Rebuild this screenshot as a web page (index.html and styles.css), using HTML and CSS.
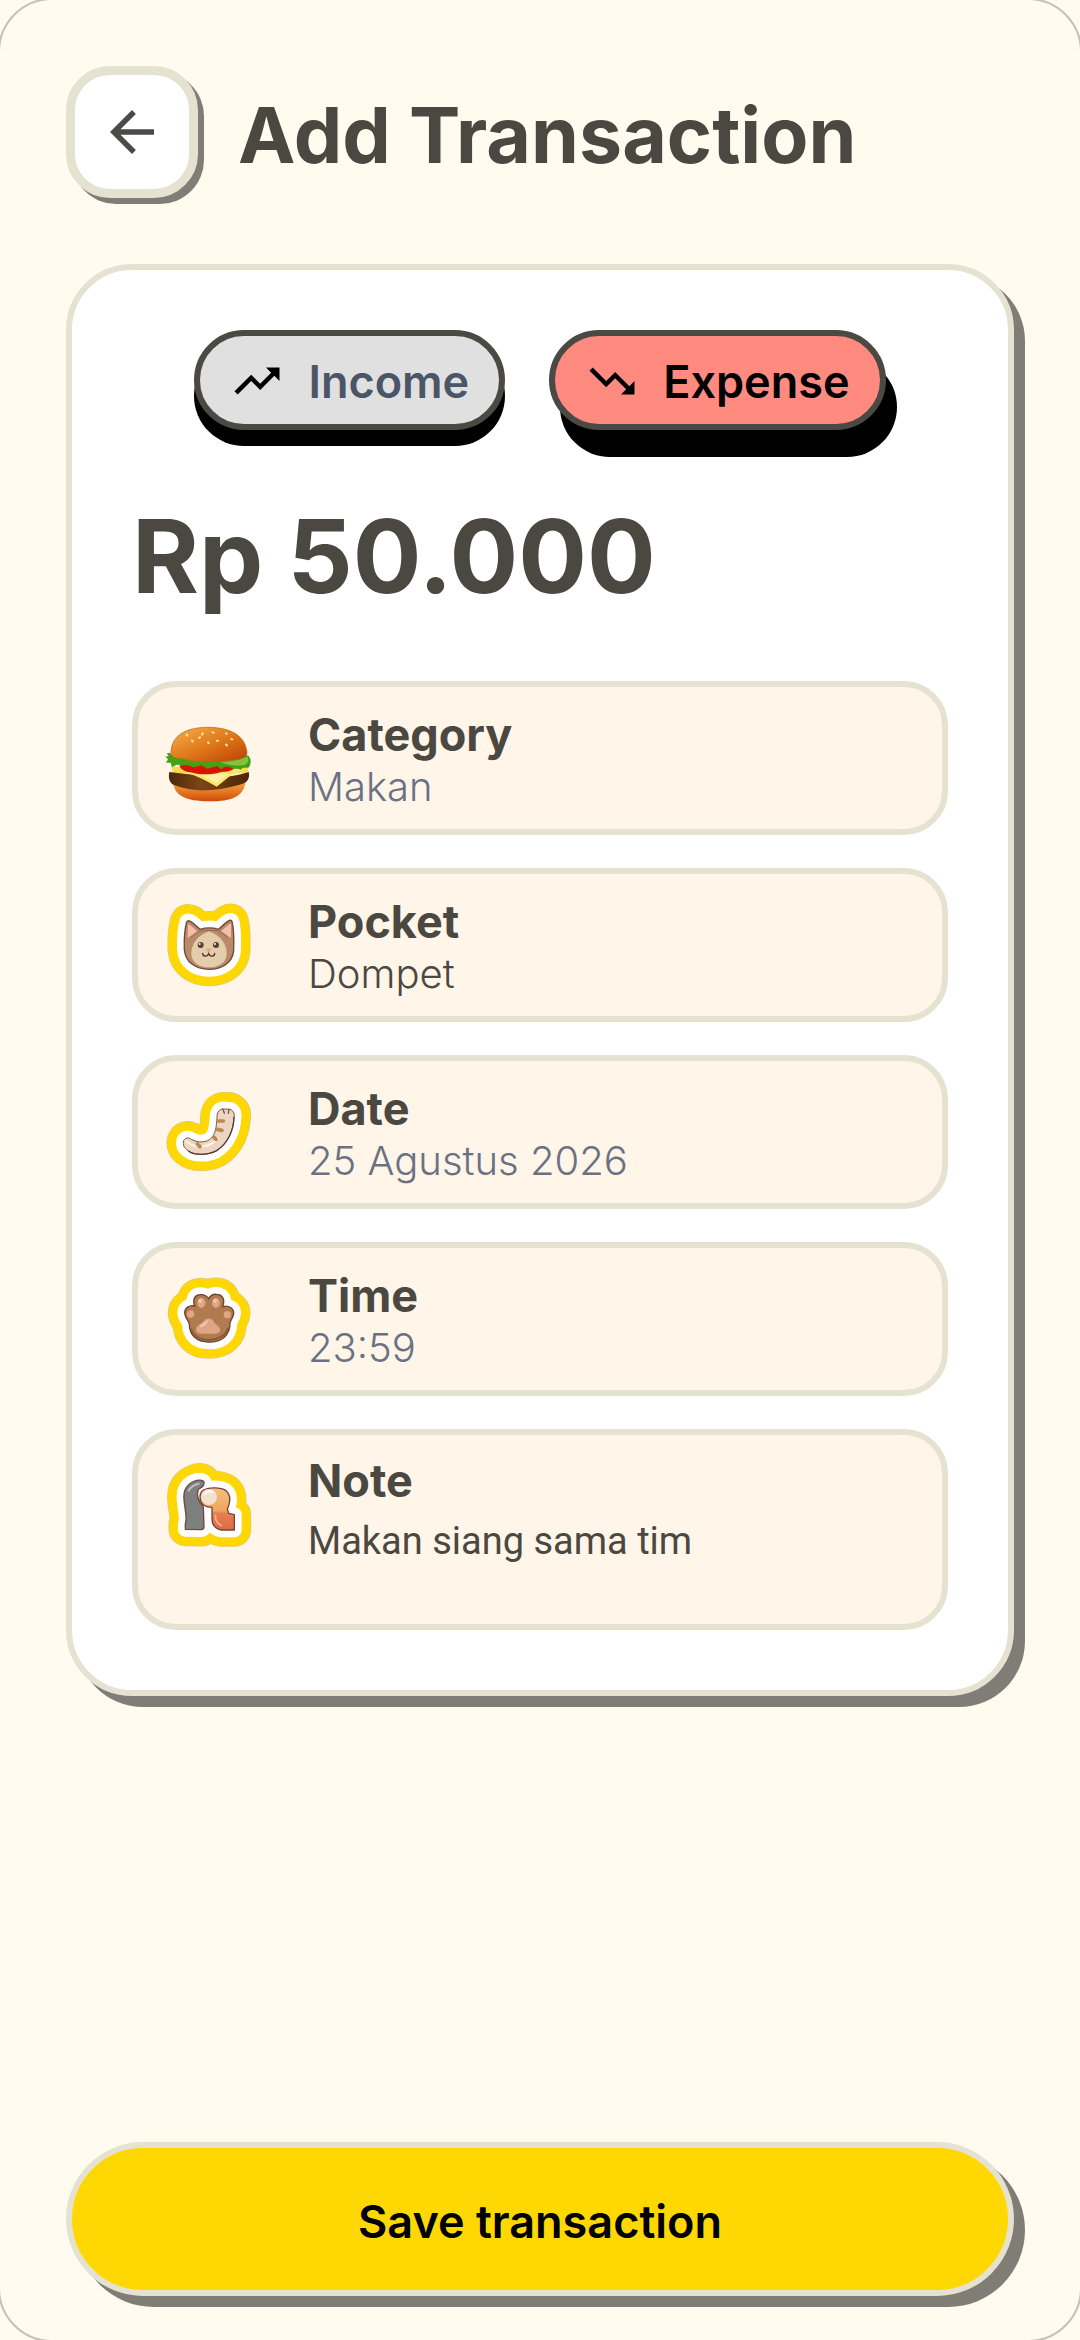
FILE: index.html
```html
<!DOCTYPE html>
<html lang="en">
  <head>
    <meta charset="utf-8">
    <meta name="viewport" content="width=device-width, initial-scale=1">
    <title>Add Transaction</title>
    <link rel="stylesheet" href="styles.css">
  </head>
  <body>
    <header class="header">
      <button class="back" type="button" aria-label="Back">
        <svg viewBox="0 0 24 24"><path d="M20 11H7.83l5.59-5.59L12 4l-8 8 8 8 1.41-1.41L7.83 13H20v-2z" /></svg>
      </button>
      <h1>Add Transaction</h1>
    </header>

    <form class="form">
      <div class="card">
        <div class="types">
          <button class="type income" type="button" aria-pressed="false">
            <svg viewBox="0 0 24 24"><path d="M16 6l2.29 2.29-4.88 4.88-4-4L2 16.59 3.41 18l6-6 4 4 6.3-6.29L22 12V6z" /></svg>
            Income
          </button>
          <button class="type expense" type="button" aria-pressed="true">
            <svg viewBox="0 0 24 24"><path d="M16 18l2.29-2.29-4.88-4.88-4 4L2 7.41 3.41 6l6 6 4-4 6.3 6.29L22 12v6z" /></svg>
            Expense
          </button>
        </div>

        <input class="amount" type="text" aria-label="Amount" value="Rp 50.000">

        <div class="fields">
          <button class="field" type="button">
            <svg class="field-icon" viewBox="135 132 264 264">
              <defs>
                <linearGradient id="bun" x1="0" y1="0" x2="1" y2="1">
                  <stop offset="0" stop-color="#f6b04a" />
                  <stop offset=".5" stop-color="#e07a1c" />
                  <stop offset="1" stop-color="#bd3f02" />
                </linearGradient>
                <linearGradient id="bottomBun" x1="0" y1="0" x2="0" y2="1">
                  <stop offset="0" stop-color="#f5a03c" />
                  <stop offset="1" stop-color="#cf4d08" />
                </linearGradient>
                <linearGradient id="patty" x1="0" y1="0" x2="1" y2="0">
                  <stop offset="0" stop-color="#4a2a0c" />
                  <stop offset=".4" stop-color="#7d4516" />
                  <stop offset="1" stop-color="#4c2507" />
                </linearGradient>
              </defs>
              <path fill="url(#bottomBun)" d="M160 340C164 376 196 394 267 394S370 378 376 338Z" />
              <path fill="#fbd84e" d="M154 290h228l4 14-14 6H160z" />
              <path fill="url(#patty)" d="M148 306C144 324 148 340 164 346C200 358 236 364 270 360C304 358 330 352 366 342C384 338 390 322 386 306C350 318 320 320 290 322L200 312Z" />
              <path fill="#ffe56b" d="M180 300C220 314 258 330 290 350L330 318L378 296Z" />
              <path fill="#fff2a4" d="M240 314L328 312L290 338Z" />
              <path fill="#d91407" d="M178 286C182 302 200 306 218 308C244 316 280 314 304 306C326 306 338 302 344 292L300 280Z" />
              <path fill="#46a012" d="M140 250L150 248 156 256C220 276 320 276 382 256C394 262 394 278 388 290C380 298 370 288 362 300C352 292 342 302 330 290L314 290 304 298 292 288 262 296 244 286 222 292 204 286 170 284 156 292 152 278 138 278 144 268 136 260 146 258Z" />
              <path fill="#83c33d" d="M300 276C330 274 356 270 382 260C388 268 384 278 376 284C350 290 326 286 300 276Z" />
              <path fill="url(#bun)" stroke="#a96c22" stroke-width="2" d="M153 250C152 206 186 172 262 172C340 172 376 202 381 246C382 264 362 268 340 270C290 278 236 278 184 266C164 264 154 262 153 250Z" />
              <g stroke="#ffe9a0" stroke-width="6" stroke-linecap="round">
                <path d="M202 196l-2-3M218 214l-2-2M237 204l3-2M248 190l-2 3M266 219l-2-2M281 188l-3-1M294 212l-3 1M320 191l-2-1M334 207l3 1M321 226l-3-2" />
              </g>
            </svg>
            <span class="field-text">
              <strong>Category</strong>
              <span class="value">Makan</span>
            </span>
          </button>

          <button class="field" type="button">
            <svg class="field-icon" viewBox="135 123 264 264">
              <defs>
                <path id="cat" d="M200 186C204 178 212 182 240 208C256 203 280 203 296 208C322 182 332 176 336 184C342 206 342 240 341 272C338 308 306 328 267 328S196 308 193 268C192 240 194 208 200 186Z" />
              </defs>
              <use href="#cat" class="sticker-edge" />
              <use href="#cat" class="sticker-ring" />
              <use href="#cat" class="sticker-white" />
              <use href="#cat" fill="#b98a68" stroke="#6f4a3b" stroke-width="4" />
              <path fill="#f3bfab" d="M204 192C210 194 224 206 232 214L203 234ZM333 190C324 194 312 206 304 214L333 234Z" />
              <path fill="#e3cdab" d="M267 214C300 226 322 252 320 284C318 308 296 322 267 322S216 308 214 284C212 252 234 226 267 214Z" />
              <path fill="none" stroke="#98694d" stroke-width="3" d="M214 234C226 214 250 208 267 212C286 208 308 214 322 234" />
              <circle cx="242" cy="255" r="9" fill="#554033" />
              <circle cx="288" cy="255" r="9" fill="#554033" />
              <circle cx="239" cy="252" r="3" fill="#fff" />
              <circle cx="285" cy="252" r="3" fill="#fff" />
              <path fill="#ef9d8b" d="M257 266h18l-9 12z" />
              <path fill="none" stroke="#4c3429" stroke-width="4" stroke-linecap="round" d="M248 280C248 290 262 292 266 281C270 292 284 290 284 280" />
            </svg>
            <span class="field-text">
              <strong>Pocket</strong>
              <span class="value dark">Dompet</span>
            </span>
          </button>

          <button class="field" type="button">
            <svg class="field-icon" viewBox="135 114 264 264">
              <defs>
                <path id="tail" d="M191 272C196 262 206 262 214 268C236 280 260 278 274 264C290 248 289 222 292 192C296 178 308 174 318 178C332 174 346 184 342 202C341 240 324 280 290 302C262 317 222 316 204 302C192 294 188 284 191 272Z" />
              </defs>
              <use href="#tail" class="sticker-edge" />
              <use href="#tail" class="sticker-ring" />
              <use href="#tail" class="sticker-white" />
              <use href="#tail" fill="#ecd6c1" stroke="#7b564c" stroke-width="3" />
              <path fill="none" stroke="#5b3c3b" stroke-width="4" stroke-linecap="round" d="M342 202C341 240 324 280 290 302C262 317 222 316 206 304" />
              <path fill="none" stroke="#fff3e6" stroke-width="6" stroke-linecap="round" d="M198 274C224 296 268 296 294 264" />
              <path fill="none" stroke="#b98a56" stroke-width="11" stroke-linecap="round" d="M294 213h16M292 238l14 3M282 262l6 6M232 282l8 8" />
              <path fill="none" stroke="#7b564c" stroke-width="4" stroke-linecap="round" d="M309 178l4 12M327 178l-2 12" />
            </svg>
            <span class="field-text">
              <strong>Date</strong>
              <span class="value">25 Agustus 2026</span>
            </span>
          </button>

          <button class="field" type="button">
            <svg class="field-icon" viewBox="135 135 264 264">
              <defs>
                <path id="paw" d="M224 228C216 206 226 194 242 194C256 194 262 200 266 206C270 198 278 192 290 193C308 194 316 208 308 230C326 224 342 236 341 250C340 264 332 268 330 280C330 316 306 336 267 336S208 314 208 282C206 270 194 264 194 248C194 234 208 224 224 228Z" />
              </defs>
              <use href="#paw" class="sticker-edge" />
              <use href="#paw" class="sticker-ring" />
              <use href="#paw" class="sticker-white" />
              <use href="#paw" fill="#b07b4e" stroke="#6f432e" stroke-width="4" />
              <path fill="none" stroke="#8b5635" stroke-width="5" d="M214 296C224 342 312 340 324 294" />
              <g fill="#e0a582">
                <ellipse cx="244" cy="219" rx="12" ry="15" />
                <ellipse cx="288" cy="219" rx="12" ry="15" />
                <circle cx="212" cy="252" r="11" />
                <circle cx="322" cy="254" r="11" />
                <path d="M228 298C230 284 246 282 254 270C260 264 272 264 278 270C284 284 298 286 300 298C302 312 290 312 264 311C240 312 228 312 228 298Z" />
              </g>
              <g fill="#f2c7a9">
                <circle cx="241" cy="213" r="6" />
                <circle cx="285" cy="213" r="6" />
                <path d="M240 286C248 284 254 274 266 270C262 282 252 290 240 292Z" />
              </g>
            </svg>
            <span class="field-text">
              <strong>Time</strong>
              <span class="value">23:59</span>
            </span>
          </button>

          <div class="field note">
            <svg class="field-icon" viewBox="135 123 264 264">
              <defs>
                <g id="hands">
                  <path d="M196 328L196 312C206 284 184 244 194 212C204 186 236 174 251 184C255 194 247 202 236 207C228 222 234 244 250 260L252 324L246 329Z" />
                  <path d="M248 212C262 202 300 200 318 212C334 226 330 250 322 268L326 280L343 284L343 330L304 330C282 326 276 312 276 296L276 262C258 262 246 256 242 242C238 228 240 218 248 212Z" />
                </g>
                <linearGradient id="arm" x1="0" y1="0" x2="0" y2="1">
                  <stop offset="0" stop-color="#f6bf77" />
                  <stop offset=".55" stop-color="#f0a45f" />
                  <stop offset=".6" stop-color="#e77f50" />
                  <stop offset="1" stop-color="#dd6b42" />
                </linearGradient>
              </defs>
              <use href="#hands" class="sticker-edge" />
              <use href="#hands" class="sticker-ring" />
              <use href="#hands" class="sticker-white" />
              <g stroke="#75433c" stroke-width="4" stroke-linejoin="round">
                <path fill="#7c807f" d="M196 328L196 312C206 284 184 244 194 212C204 186 236 174 251 184C255 194 247 202 236 207C228 222 234 244 250 260L252 324L246 329Z" />
                <path fill="url(#arm)" d="M248 212C262 202 300 200 318 212C334 226 330 250 322 268L326 280L343 284L343 330L304 330C282 326 276 312 276 296L276 262C258 262 246 256 242 242C238 228 240 218 248 212Z" />
              </g>
              <ellipse cx="267" cy="231" rx="24" ry="24" fill="#f0e2cf" />
              <path fill="none" stroke="#b9bdbc" stroke-width="6" stroke-linecap="round" d="M206 212C212 200 224 194 236 191" />
              <path fill="none" stroke="#fff" stroke-width="6" stroke-linecap="round" d="M254 222C260 214 270 212 278 216" />
              <path fill="none" stroke="#f7b48f" stroke-width="5" stroke-linecap="round" d="M286 286C286 300 292 312 304 316" />
            </svg>
            <div class="field-text">
              <label for="note">Note</label>
              <textarea id="note" rows="2">Makan siang sama tim</textarea>
            </div>
          </div>
        </div>
      </div>

      <button class="save" type="button">Save transaction</button>
    </form>
  </body>
</html>
```
FILE: styles.css
```css
* {
  box-sizing: border-box;
}

body {
  display: flex;
  flex-direction: column;
  min-height: 100vh;
  margin: 0;
  padding: 66px 66px 44px;
  background-color: #fffbee;
  color: #4a4841;
  font-family: Inter, "Open Sans", sans-serif;
}

/* rounded screen outline, only the corners show */
body::before {
  content: "";
  position: fixed;
  inset: -2px;
  border: 2px solid #c4c2b4;
  border-radius: 54px;
  pointer-events: none;
}

button,
input,
textarea {
  margin: 0;
  color: inherit;
  font-family: inherit;
}

.header {
  display: flex;
  align-items: center;
  gap: 40px;
  margin-bottom: 66px;
}

.back {
  display: flex;
  align-items: center;
  justify-content: center;
  width: 132px;
  height: 132px;
  padding: 0;
  background-color: #fff;
  border: 9px solid #e5e2d2;
  border-radius: 44px;
  box-shadow: 6px 6px 0 #807d76;
}

.back svg {
  width: 66px;
  height: 66px;
  fill: #4a4a48;
}

h1 {
  margin: 0;
  padding-top: 6px;
  font-size: 77px;
  font-weight: 700;
  line-height: 96px;
}

.form {
  display: flex;
  flex: 1;
  flex-direction: column;
  justify-content: space-between;
}

.card {
  padding: 60px;
  background-color: #fff;
  border: 6px solid #e5e2d2;
  border-radius: 66px;
  box-shadow: 11px 11px 0 #807d76;
}

.types {
  display: flex;
  justify-content: center;
  gap: 44px;
}

.type {
  display: flex;
  align-items: center;
  gap: 24px;
  height: 100px;
  padding: 2px 30px 0;
  border: 6px solid #4a4944;
  border-radius: 50px;
  font-size: 45px;
  font-weight: 600;
}

.type svg {
  width: 54px;
  height: 54px;
  fill: #000;
}

.income {
  background-color: #e0e0e0;
  color: #4b5568;
  box-shadow: 0 16px 0 #000;
}

.expense {
  background-color: #ff8a80;
  color: #000;
  box-shadow: 11px 27px 0 #000;
}

.amount {
  display: block;
  width: 100%;
  height: 128px;
  margin: 62px 0 61px;
  padding: 0;
  background: none;
  border: 0;
  font-size: 102px;
  font-weight: 700;
}

.fields {
  display: flex;
  flex-direction: column;
  gap: 33px;
}

.field {
  display: flex;
  align-items: center;
  gap: 55px;
  width: 100%;
  height: 154px;
  padding: 0 27px;
  background-color: #fff5e8;
  border: 6px solid #e5e2d2;
  border-radius: 44px;
  text-align: left;
}

.field-icon {
  flex: none;
  width: 88px;
  height: 88px;
}

.field-text {
  display: flex;
  flex: 1;
  flex-direction: column;
  padding-top: 6px;
}

.field strong,
.field label {
  font-size: 45px;
  font-weight: 700;
  line-height: 52px;
}

.value {
  color: #6b7183;
  font-size: 40px;
  font-weight: 300;
  line-height: 52px;
}

.value.dark {
  color: #4a4841;
}

.note {
  align-items: flex-start;
  height: auto;
  padding: 20px 27px 0;
}

.note .field-icon {
  margin-top: 6px;
}

.note .field-text {
  padding: 0;
}

.note textarea {
  height: 117px;
  padding: 8px 0 0;
  background: none;
  border: 0;
  outline: 0;
  resize: none;
  font-family: Roboto, sans-serif;
  font-size: 38px;
  line-height: 52px;
}

.save {
  height: 154px;
  padding: 4px 0 0;
  background-color: #ffd803;
  border: 6px solid #e5e2d2;
  border-radius: 77px;
  box-shadow: 11px 11px 0 #807d76;
  color: #000;
  font-size: 45px;
  font-weight: 600;
}

/* cat stickers: thin edge, yellow ring, white ring */
.sticker-edge,
.sticker-ring,
.sticker-white {
  stroke-linejoin: round;
}

.sticker-edge {
  fill: none;
  stroke: #d8c87c;
  stroke-width: 101px;
}

.sticker-ring {
  fill: #ffd803;
  stroke: #ffd803;
  stroke-width: 97px;
}

.sticker-white {
  fill: #fff;
  stroke: #fff;
  stroke-width: 44px;
}
```
